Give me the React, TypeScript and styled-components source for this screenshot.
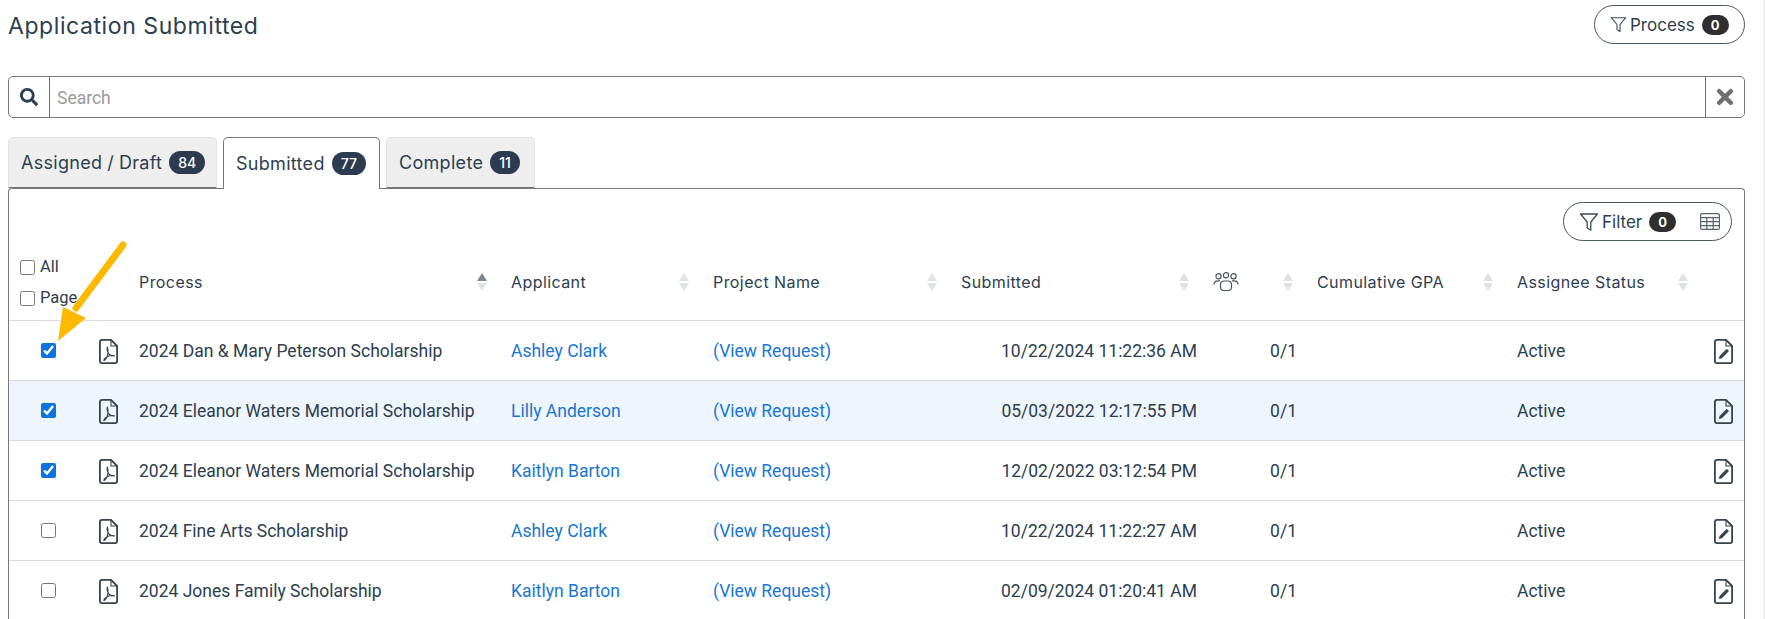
import React from "react";
import styled, { createGlobalStyle } from "styled-components";
import { FaSearch, FaTimes } from "react-icons/fa";

const Global = createGlobalStyle`
  html, body { margin: 0; padding: 0; background: #fff; height: 619px; overflow: hidden; }
  body { font-family: Roboto, "Liberation Sans", sans-serif; color: #2c3e50; }
  * { box-sizing: border-box; }
`;

const Page = styled.div`
  width: 1765px;
  height: 619px;
  overflow: hidden;
  padding: 5px 18px 0 8px;
  border-right: 2px solid #f0f0f0;
  position: relative;
`;
const TopBar = styled.header`
  display: flex;
  justify-content: space-between;
  align-items: center;
  height: 39px;
`;
const Title = styled.h1`
  margin: 4px 0 0;
  font: 400 23px/1 Inter, sans-serif;
  letter-spacing: 0.58px;
  color: #2c3e50;
`;
const Pill = styled.div<{ $w: number }>`
  width: ${(p) => p.$w}px;
  height: 39px;
  border: 1px solid #4a5563;
  border-radius: 20px;
  display: flex;
  align-items: center;
  padding-left: 15px;
  font: 400 17px Inter, sans-serif;
  color: #2c3e50;
`;
const PillLabel = styled.span`
  margin-left: 3px;
  margin-right: 7px;
`;
const Zero = styled.span`
  width: 27px;
  height: 20px;
  border-radius: 10px;
  background: #2f2f2f;
  color: #fff;
  font: 700 13px/20px Inter, sans-serif;
  text-align: center;
`;
const SearchBar = styled.div`
  margin-top: 32px;
  height: 42px;
  border: 1px solid #777;
  border-radius: 5px;
  display: flex;
  align-items: stretch;
`;
const Addon = styled.div<{ $side: "l" | "r" }>`
  width: ${(p) => (p.$side === "l" ? 41 : 39)}px;
  display: flex;
  align-items: center;
  justify-content: center;
  color: ${(p) => (p.$side === "l" ? "#2c3e50" : "#6f6f6f")};
  font-size: ${(p) => (p.$side === "l" ? 18 : 24)}px;
  ${(p) => (p.$side === "l" ? "border-right: 1px solid #777;" : "border-left: 1px solid #777;")}
`;
const SearchInput = styled.input`
  flex: 1;
  border: 0;
  outline: 0;
  padding: 1px 7px 0;
  font: 400 17.5px Roboto, sans-serif;
  &::placeholder { color: #9a9a9a; opacity: 1; }
`;
const Tabs = styled.nav`
  margin-top: 19px;
  display: flex;
  gap: 6px;
  height: 52px;
  margin-bottom: -1px;
  position: relative;
  z-index: 1;
`;
const Tab = styled.div<{ $active?: boolean; $w: number }>`
  width: ${(p) => p.$w}px;
  height: ${(p) => (p.$active ? 52 : 51)}px;
  display: flex;
  align-items: center;
  padding-left: 12px;
  gap: 7px;
  border-radius: 5px 5px 0 0;
  border: 1px solid ${(p) => (p.$active ? "#777" : "#e2e2e2")};
  border-bottom: ${(p) => (p.$active ? "0" : "1px solid #777")};
  background: ${(p) => (p.$active ? "#fff" : "#eee")};
  font: 400 18px Inter, sans-serif;
  letter-spacing: 0.3px;
  word-spacing: -0.5px;
  color: #2c3e50;
`;
const TabBadge = styled.span`
  padding: 0 9px;
  height: 23px;
  border-radius: 12px;
  background: #2c3b4f;
  color: #fff;
  font: 500 14px/23px Inter, sans-serif;
  letter-spacing: 0;
`;
const Panel = styled.section`
  border: 1px solid #777;
  border-bottom: 0;
  border-radius: 4px 4px 0 0;
  height: 460px;
`;
const PanelTools = styled.div`
  display: flex;
  justify-content: flex-end;
  padding: 13px 12px 0 0;
`;
const FilterPill = styled(Pill)`
  padding-left: 15px;
`;
const ToolSpacer = styled.span`
  flex: 1;
`;
const GridIcon = styled.span`
  display: flex;
  margin-right: 11px;
`;
const Table = styled.table`
  width: 100%;
  border-collapse: collapse;
  table-layout: fixed;
`;
const Th = styled.th`
  height: 79px;
  padding: 3px 12px 0 12px;
  font: 400 16px Inter, sans-serif;
  letter-spacing: 0.42px;
  color: #2c3e50;
  text-align: left;
  border-bottom: 1px solid #ddd;
`;
const ThInner = styled.div`
  display: flex;
  align-items: center;
  justify-content: space-between;
`;
const Sort = styled.span`
  display: flex;
  flex-direction: column;
  gap: 2px;
`;
const SortTri = styled.i<{ $up?: boolean; $on?: boolean }>`
  display: block;
  width: 0;
  height: 0;
  border-left: 5px solid transparent;
  border-right: 5px solid transparent;
  ${(p) => (p.$up ? "border-bottom" : "border-top")}: 8px solid ${(p) => (p.$on ? "#7d8792" : "#dfe2e6")};
`;
const SelectAll = styled.div`
  display: flex;
  flex-direction: column;
  gap: 15px;
  margin: 2px 0 0 -1px;
`;
const CheckLabel = styled.label`
  display: flex;
  align-items: center;
  gap: 5px;
  font: 400 16.5px/16px Roboto, sans-serif;
  letter-spacing: 0;
`;
const Box = styled.input.attrs({ type: "checkbox", readOnly: true })`
  display: block;
  width: 15px;
  height: 15px;
  margin: 0;
  accent-color: #0b74de;
`;
const RowBox = styled(Box)`
  margin: 0 auto;
`;
const Tr = styled.tr<{ $hl?: boolean }>`
  background: ${(p) => (p.$hl ? "#eef5fd" : "#fff")};
`;
const Td = styled.td<{ $align?: string; $pr?: number; $pl?: number }>`
  height: 60px;
  padding: 1px ${(p) => p.$pr ?? 6}px 0 ${(p) => p.$pl ?? 12}px;
  border-bottom: 1px solid #ddd;
  font: 400 17.5px Roboto, sans-serif;
  color: #2c3e50;
  text-align: ${(p) => p.$align ?? "left"};
  white-space: nowrap;
  svg { display: block; margin: 1px auto 0; }
`;
const ALink = styled.a`
  color: #1976d2;
  text-decoration: none;
`;
const ArrowSvg = styled.svg`
  position: absolute;
  left: 50px;
  top: 238px;
  pointer-events: none;
`;

const Funnel = ({ s }: { s: number }) => (
  <svg width={s} height={s} viewBox="0 0 20 20" fill="none" stroke="#3e4b5b" strokeWidth="1.3" strokeLinejoin="round">
    <path d="M1.5 2h17l-6.7 8v8.2l-3.6-2.2V10z" />
  </svg>
);
const GridSvg = () => (
  <svg width="20" height="17" viewBox="0 0 20 17" fill="none" stroke="#56626f" strokeWidth="1.2">
    <rect x=".6" y=".6" width="18.8" height="15.8" rx="1.5" />
    <path d="M.6 4.6h18.8M.6 8.6h18.8M.6 12.6h18.8M6.8 4.6v11.8M13.2 4.6v11.8" />
  </svg>
);
const Pdf = () => (
  <svg width="19" height="25" viewBox="0 0 19 25" fill="none" stroke="#36434f">
    <path d="M12 .9H3A2.1 2.1 0 0 0 .9 3v19A2.1 2.1 0 0 0 3 24.1h13a2.1 2.1 0 0 0 2.1-2.1V7z" strokeWidth="1.8" strokeLinejoin="round" />
    <path d="M12 .9V7h6.1" strokeWidth="1.1" />
    <path d="M8.4 8c-.8 3 .5 6 2.2 7.6 1.3 1 3.4 1.5 4.8 1.2-2.6-.6-6.5.2-8.5 1.7-1.4 1-2.1 2.4-2 3 1.5-.3 3.3-3.4 3.8-6 .3-1.6.4-5.3-.3-7.5z" strokeWidth="1.2" strokeLinejoin="round" />
  </svg>
);
const Edit = () => (
  <svg width="19" height="25" viewBox="0 0 19 25" fill="none" stroke="#36434f">
    <path d="M12 .9H3A2.1 2.1 0 0 0 .9 3v19A2.1 2.1 0 0 0 3 24.1h13a2.1 2.1 0 0 0 2.1-2.1V7z" strokeWidth="1.8" strokeLinejoin="round" />
    <path d="M12 .9V7h6.1" strokeWidth="1.1" />
    <path d="M5 19.8l.9-2.9 6.8-6.8 2 2-6.8 6.8z" fill="#36434f" strokeWidth=".5" />
  </svg>
);
const Group = () => (
  <svg width="26" height="20" viewBox="0 0 26 20" fill="none" stroke="#4a5563" strokeWidth="1.2">
    <circle cx="5.5" cy="4.2" r="2.6" />
    <circle cx="13" cy="3.2" r="2.6" />
    <circle cx="20.5" cy="4.2" r="2.6" />
    <path d="M1 12.5c0-2.4 1.6-3.7 4-3.7h2M25 12.5c0-2.4-1.6-3.7-4-3.7h-2" />
    <rect x="7.5" y="9" width="11" height="9.5" rx="3.5" />
  </svg>
);

const SortIcons = ({ on }: { on?: boolean }) => (
  <Sort>
    <SortTri $up $on={on} />
    <SortTri />
  </Sort>
);

const rows = [
  { c: true, p: "2024 Dan & Mary Peterson Scholarship", a: "Ashley Clark", d: "10/22/2024 11:22:36 AM" },
  { c: true, h: true, p: "2024 Eleanor Waters Memorial Scholarship", a: "Lilly Anderson", d: "05/03/2022 12:17:55 PM" },
  { c: true, p: "2024 Eleanor Waters Memorial Scholarship", a: "Kaitlyn Barton", d: "12/02/2022 03:12:54 PM" },
  { c: false, p: "2024 Fine Arts Scholarship", a: "Ashley Clark", d: "10/22/2024 11:22:27 AM" },
  { c: false, p: "2024 Jones Family Scholarship", a: "Kaitlyn Barton", d: "02/09/2024 01:20:41 AM" },
];

const Col = styled.col<{ $w?: number }>`
  width: ${(p) => (p.$w ? `${p.$w}px` : "auto")};
`;

export default function App() {
  return (
    <Page>
      <Global />
      <TopBar>
        <Title>Application Submitted</Title>
        <Pill $w={151}>
          <Funnel s={17} />
          <PillLabel>Process</PillLabel>
          <Zero>0</Zero>
        </Pill>
      </TopBar>
      <SearchBar>
        <Addon $side="l"><FaSearch /></Addon>
        <SearchInput placeholder="Search" />
        <Addon $side="r"><FaTimes /></Addon>
      </SearchBar>
      <Tabs>
        <Tab $w={209}>Assigned / Draft <TabBadge>84</TabBadge></Tab>
        <Tab $active $w={157}>Submitted <TabBadge>77</TabBadge></Tab>
        <Tab $w={149}>Complete <TabBadge>11</TabBadge></Tab>
      </Tabs>
      <Panel>
        <PanelTools>
          <FilterPill $w={169}>
            <Funnel s={20} />
            <PillLabel>Filter</PillLabel>
            <Zero>0</Zero>
            <ToolSpacer />
            <GridIcon><GridSvg /></GridIcon>
          </FilterPill>
        </PanelTools>
        <Table>
          <colgroup>
            <Col $w={79} />
            <Col $w={39} />
            <Col $w={372} />
            <Col $w={202} />
            <Col $w={248} />
            <Col $w={252} />
            <Col $w={104} />
            <Col $w={200} />
            <Col $w={195} />
            <Col />
          </colgroup>
          <thead>
            <tr>
              <Th colSpan={2}>
                <SelectAll>
                  <CheckLabel><Box />All</CheckLabel>
                  <CheckLabel><Box />Page</CheckLabel>
                </SelectAll>
              </Th>
              <Th><ThInner>Process<SortIcons on /></ThInner></Th>
              <Th><ThInner>Applicant<SortIcons /></ThInner></Th>
              <Th><ThInner>Project Name<SortIcons /></ThInner></Th>
              <Th><ThInner>Submitted<SortIcons /></ThInner></Th>
              <Th><ThInner><Group /><SortIcons /></ThInner></Th>
              <Th><ThInner>Cumulative GPA<SortIcons /></ThInner></Th>
              <Th><ThInner>Assignee Status<SortIcons /></ThInner></Th>
              <Th />
            </tr>
          </thead>
          <tbody>
            {rows.map((r, i) => (
              <Tr key={i} $hl={r.h}>
                <Td $pl={0} $pr={0}><RowBox defaultChecked={r.c} /></Td>
                <Td $pl={2} $pr={0}><Pdf /></Td>
                <Td>{r.p}</Td>
                <Td><ALink>{r.a}</ALink></Td>
                <Td><ALink>(View Request)</ALink></Td>
                <Td $align="right" $pr={4}>{r.d}</Td>
                <Td $align="right" $pr={8}>0/1</Td>
                <Td />
                <Td>Active</Td>
                <Td $pl={2} $pr={0}><Edit /></Td>
              </Tr>
            ))}
          </tbody>
        </Table>
      </Panel>
      <ArrowSvg width="80" height="110" viewBox="0 0 80 110">
        <path d="M73 7L26 70" stroke="#fdb900" strokeWidth="7" strokeLinecap="round" />
        <path d="M8 103L13 69L36 80z" fill="#fdb900" />
      </ArrowSvg>
    </Page>
  );
}
